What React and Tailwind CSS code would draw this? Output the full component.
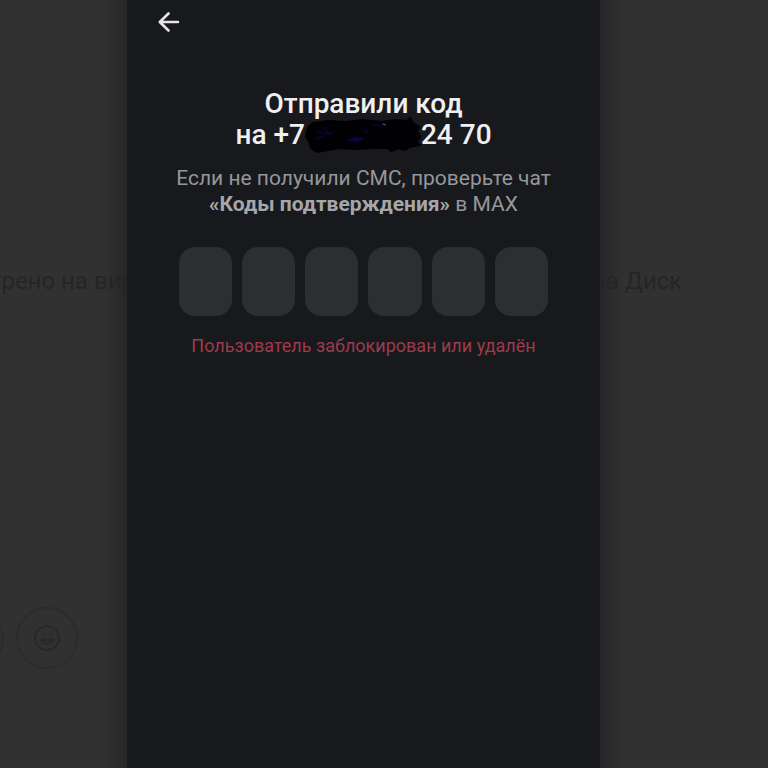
import React from "react";

const CELLS = [1, 2, 3, 4, 5, 6];

function BackIcon() {
  return (
    <svg width="24" height="24" viewBox="0 0 24 24" fill="none" stroke="currentColor" strokeWidth="2.6" strokeLinecap="round" strokeLinejoin="round" aria-hidden="true">
      <path d="M21 12H3M11.500 3.500L2.800 12L11.500 20.500" />
    </svg>
  );
}

function Scribble() {
  return (
    <svg className="-my-1 h-9 w-[116px] shrink-0" viewBox="0 0 118 36" preserveAspectRatio="none" aria-hidden="true">
      <path
        d="M3 11L8 6L24 4L42 5L58 3L78 5L92 3L104 4L107 1L110 6L116 10L114 15L118 20L113 24L117 28L106 30L102 33L96 31L88 34L84 31L70 31L50 32L36 31L24 33L12 35L6 31L4 24L1 19Z"
        fill="#010103"
        stroke="#010103"
        strokeWidth="2"
        strokeLinejoin="round"
      />
      <path d="M12 14l8 3l10-2M19 10l6 8M68 7l10 2M10 22l9-3M60 12l4 4" stroke="#05052a" strokeWidth="2" fill="none" />
      <path d="M44 22l8-2l9 1l-7 4l-10-1z" fill="#07073d" />
      <path d="M79 7l3 1" stroke="#777" strokeWidth="1" />
    </svg>
  );
}

function SmileIcon() {
  return (
    <svg width="28" height="28" viewBox="0 0 28 28" fill="none" stroke="currentColor" strokeWidth="2" strokeLinecap="round" aria-hidden="true">
      <circle cx="14" cy="14" r="12" />
      <path d="M8 16c2 5 10 5 12 0z" />
      <path d="M10 10v1M18 10v1" />
    </svg>
  );
}

export default function App() {
  return (
    <div className="grid min-h-screen grid-cols-[127fr_473fr_168fr] bg-[#313131] font-['Roboto','Liberation_Sans',sans-serif]">
      <aside className="overflow-hidden bg-linear-to-l from-[#272727] to-[#313131] to-[24px] pt-[266px] text-[#252525]">
        <p className="-mr-2 flex justify-end text-[24px] leading-[30px] whitespace-nowrap">трено на вир</p>
        <div className="mt-[311px] flex justify-end gap-3 pr-[49px] text-[#2c2c2c]">
          <span className="size-[62px] shrink-0 rounded-full border-2 border-current" />
          <button type="button" aria-label="Смайлик" className="flex size-[62px] shrink-0 items-center justify-center rounded-full border-2 border-current">
            <span className="text-[#282828]">
              <SmileIcon />
            </span>
          </button>
        </div>
      </aside>

      <main className="bg-[#18191d] px-[30px]">
        <button type="button" aria-label="Назад" className="mt-[10px] block text-[#e6e6e8]">
          <BackIcon />
        </button>

        <form className="mx-auto mt-[54px] flex max-w-[370px] flex-col items-center text-center">
          <h1 className="text-[28px] leading-[31px] font-medium whitespace-nowrap text-[#f0f0f2]">
            Отправили код
            <span className="flex items-center justify-center">
              на +7
              <Scribble />
              24 70
            </span>
          </h1>
          <p className="mt-[15px] text-[21px] leading-[26px] whitespace-nowrap text-[#96979b]">
            Если не получили СМС, проверьте чат
            <br />
            <strong className="font-bold text-[#a5a6aa]">«Коды подтверждения»</strong> в MAX
          </p>
          <div className="mt-[30px] grid w-full grid-cols-6 gap-[10px]">
            {CELLS.map((n) => (
              <input
                key={n}
                type="text"
                inputMode="numeric"
                maxLength={1}
                aria-label={`Цифра ${n}`}
                className="h-[69px] w-full rounded-[16px] bg-[#2d2e32] text-center text-[28px] text-white outline-none"
              />
            ))}
          </div>
          <p role="alert" className="mt-[18px] text-[18px] leading-[24px] whitespace-nowrap text-[#9c3c4c]">
            Пользователь заблокирован или удалён
          </p>
        </form>
      </main>

      <aside className="overflow-hidden bg-linear-to-r from-[#272727] to-[#313131] to-[24px] pt-[266px] text-[#252525]">
        <p className="-ml-2 text-[24px] leading-[30px] whitespace-nowrap">на Диск</p>
      </aside>
    </div>
  );
}
